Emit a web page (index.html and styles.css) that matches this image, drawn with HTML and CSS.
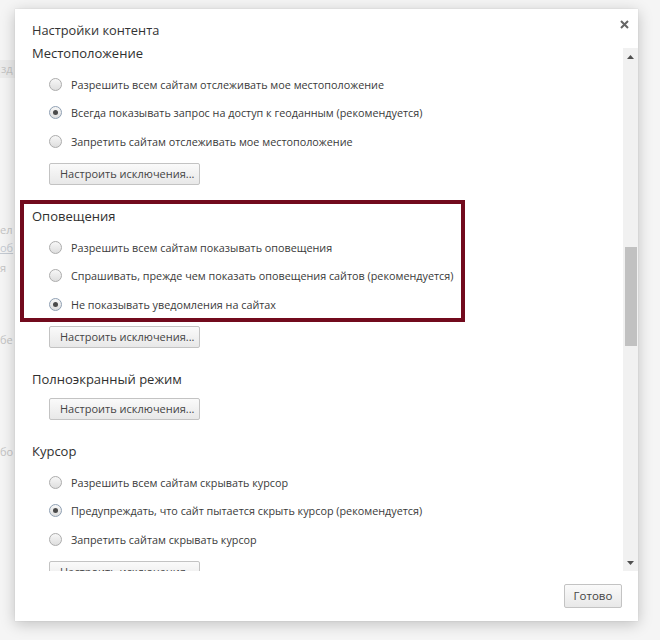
FILE: index.html
```html
<!DOCTYPE html>
<html lang="ru">
<head>
<meta charset="utf-8">
<title>Настройки контента</title>
<link rel="stylesheet" href="styles.css">
</head>
<body>
<div class="page">
  <div class="bg-field">зд</div>
  <div class="bg-line l1">ел</div>
  <div class="bg-line link l2">об</div>
  <div class="bg-line l3">я</div>
  <div class="bg-line l4">бе</div>
  <div class="bg-line l5">бо</div>
</div>

<div class="dialog">
  <div class="header">
    <div class="title">Настройки контента</div>
    <svg class="close" width="9" height="9" viewBox="0 0 9 9"><path d="M1 1L8 8M8 1L1 8" stroke="#666" stroke-width="2"/></svg>
  </div>

  <div class="body">
    <div class="content">
      <section class="sect">
        <h3 class="heading">Местоположение</h3>
        <div class="radios">
          <div class="radio"><span class="dot"></span><span>Разрешить всем сайтам отслеживать мое местоположение</span></div>
          <div class="radio"><span class="dot on"></span><span>Всегда показывать запрос на доступ к геоданным (рекомендуется)</span></div>
          <div class="radio"><span class="dot"></span><span>Запретить сайтам отслеживать мое местоположение</span></div>
        </div>
        <div class="btn">Настроить исключения...</div>
      </section>

      <section class="sect">
        <div class="marked">
          <h3 class="heading">Оповещения</h3>
          <div class="radios">
            <div class="radio"><span class="dot"></span><span>Разрешить всем сайтам показывать оповещения</span></div>
            <div class="radio"><span class="dot"></span><span>Спрашивать, прежде чем показать оповещения сайтов (рекомендуется)</span></div>
            <div class="radio"><span class="dot on"></span><span>Не показывать уведомления на сайтах</span></div>
          </div>
          <div class="mark"></div>
        </div>
        <div class="btn">Настроить исключения...</div>
      </section>

      <section class="sect">
        <h3 class="heading">Полноэкранный режим</h3>
        <div class="btn btn-near">Настроить исключения...</div>
      </section>

      <section class="sect">
        <h3 class="heading">Курсор</h3>
        <div class="radios">
          <div class="radio"><span class="dot"></span><span>Разрешить всем сайтам скрывать курсор</span></div>
          <div class="radio"><span class="dot on"></span><span>Предупреждать, что сайт пытается скрыть курсор (рекомендуется)</span></div>
          <div class="radio"><span class="dot"></span><span>Запретить сайтам скрывать курсор</span></div>
        </div>
        <div class="btn">Настроить исключения...</div>
      </section>
    </div>

    <div class="scrollbar">
      <div class="arrow"><svg width="7" height="4" viewBox="0 0 7 4"><path d="M0 4L3.5 0L7 4Z" fill="#505050"/></svg></div>
      <div class="thumb"></div>
      <div class="spacer"></div>
      <div class="arrow"><svg width="7" height="4" viewBox="0 0 7 4"><path d="M0 0L3.5 4L7 0Z" fill="#505050"/></svg></div>
    </div>
  </div>

  <div class="footer">
    <div class="btn btn-done">Готово</div>
  </div>
</div>
</body>
</html>
```

FILE: styles.css
```css
* { box-sizing: border-box; }

html, body {
  margin: 0;
  padding: 0;
}

body {
  width: 660px;
  height: 640px;
  overflow: hidden;
  background: #f5f5f5;
  font-family: "Open Sans", "Noto Sans", "DejaVu Sans", sans-serif;
  color: #333;
  position: relative;
}

/* faint page behind the modal */
.page {
  width: 15px;
  overflow: hidden;
  padding-top: 60px;
  font-size: 11px;
  color: #c4c4c4;
}

.bg-field {
  height: 18px;
  line-height: 18px;
  background: #ececec;
  padding-left: 1px;
}

.bg-line {
  height: 16px;
  line-height: 16px;
  white-space: nowrap;
}

.l1 { margin-top: 144px; }
.l2 { margin-top: 2px; text-decoration: underline; color: #c4cad2; }
.l3 { margin-top: 4px; }
.l4 { margin-top: 56px; }
.l5 { margin-top: 96px; }

/* modal dialog */
.dialog {
  position: absolute;
  left: 15px;
  top: 9px;
  width: 623px;
  height: 612px;
  background: #fff;
  box-shadow: 0 3px 14px rgba(0, 0, 0, 0.22), 0 0 1px rgba(0, 0, 0, 0.15);
  display: flex;
  flex-direction: column;
}

.header {
  height: 31px;
  flex: none;
  display: flex;
  justify-content: space-between;
  align-items: flex-start;
  padding: 12px 9px 0 17px;
}

.title {
  font-size: 12.8px;
  line-height: 18px;
  color: #333;
}

.close {
  margin-top: -1px;
}

.body {
  height: 531px;
  flex: none;
  display: flex;
}

.content {
  flex: 1;
  overflow: hidden;
  padding: 3px 0 0 17px;
}

.sect {
  margin: 0 0 21px 0;
}

.heading {
  margin: 0;
  font-weight: normal;
  font-size: 13px;
  line-height: 20px;
  color: #303030;
}

.radios {
  margin-top: 7px;
}

.radio {
  height: 28.5px;
  display: flex;
  align-items: center;
  padding-left: 17px;
  font-size: 10.8px;
  color: #3a3a3a;
  white-space: nowrap;
}

.dot {
  width: 13px;
  height: 13px;
  border-radius: 50%;
  border: 1px solid #acacac;
  background: linear-gradient(#f7f7f7, #dedede);
  margin-right: 9px;
  flex: none;
  display: flex;
  align-items: center;
  justify-content: center;
}

.dot.on {
  border-color: #8fa0b3;
}

.dot.on::after {
  content: "";
  width: 5px;
  height: 5px;
  border-radius: 50%;
  background: #4a4a4a;
}

.btn {
  margin: 7.5px 0 0 17px;
  width: 151px;
  height: 22px;
  overflow: hidden;
  border: 1px solid #c3c3c3;
  border-radius: 2px;
  background: linear-gradient(#fafafa, #e8e8e8);
  font-size: 11px;
  line-height: 20px;
  padding-left: 10px;
  color: #444;
  white-space: nowrap;
}

.btn-near {
  margin-top: 9px;
}

.marked {
  position: relative;
}

.mark {
  position: absolute;
  left: -12px;
  top: -6px;
  width: 445px;
  height: 122px;
  border: 4.5px solid #720a1d;
}

/* scrollbar */
.scrollbar {
  width: 15px;
  flex: none;
  margin-top: 8px;
  background: #f1f1f1;
  display: flex;
  flex-direction: column;
  align-items: center;
}

.arrow {
  height: 17px;
  flex: none;
  display: flex;
  align-items: center;
  justify-content: center;
}

.thumb {
  margin-top: 182px;
  width: 12px;
  height: 99px;
  background: #c1c1c1;
  flex: none;
}

.spacer { flex: 1; }

.footer {
  flex: 1;
  display: flex;
  justify-content: flex-end;
  padding: 13px 16px 0 0;
}

.btn-done {
  margin: 0;
  width: 58px;
  height: 24px;
  line-height: 22px;
  padding: 0;
  text-align: center;
  font-size: 11.5px;
}
```
